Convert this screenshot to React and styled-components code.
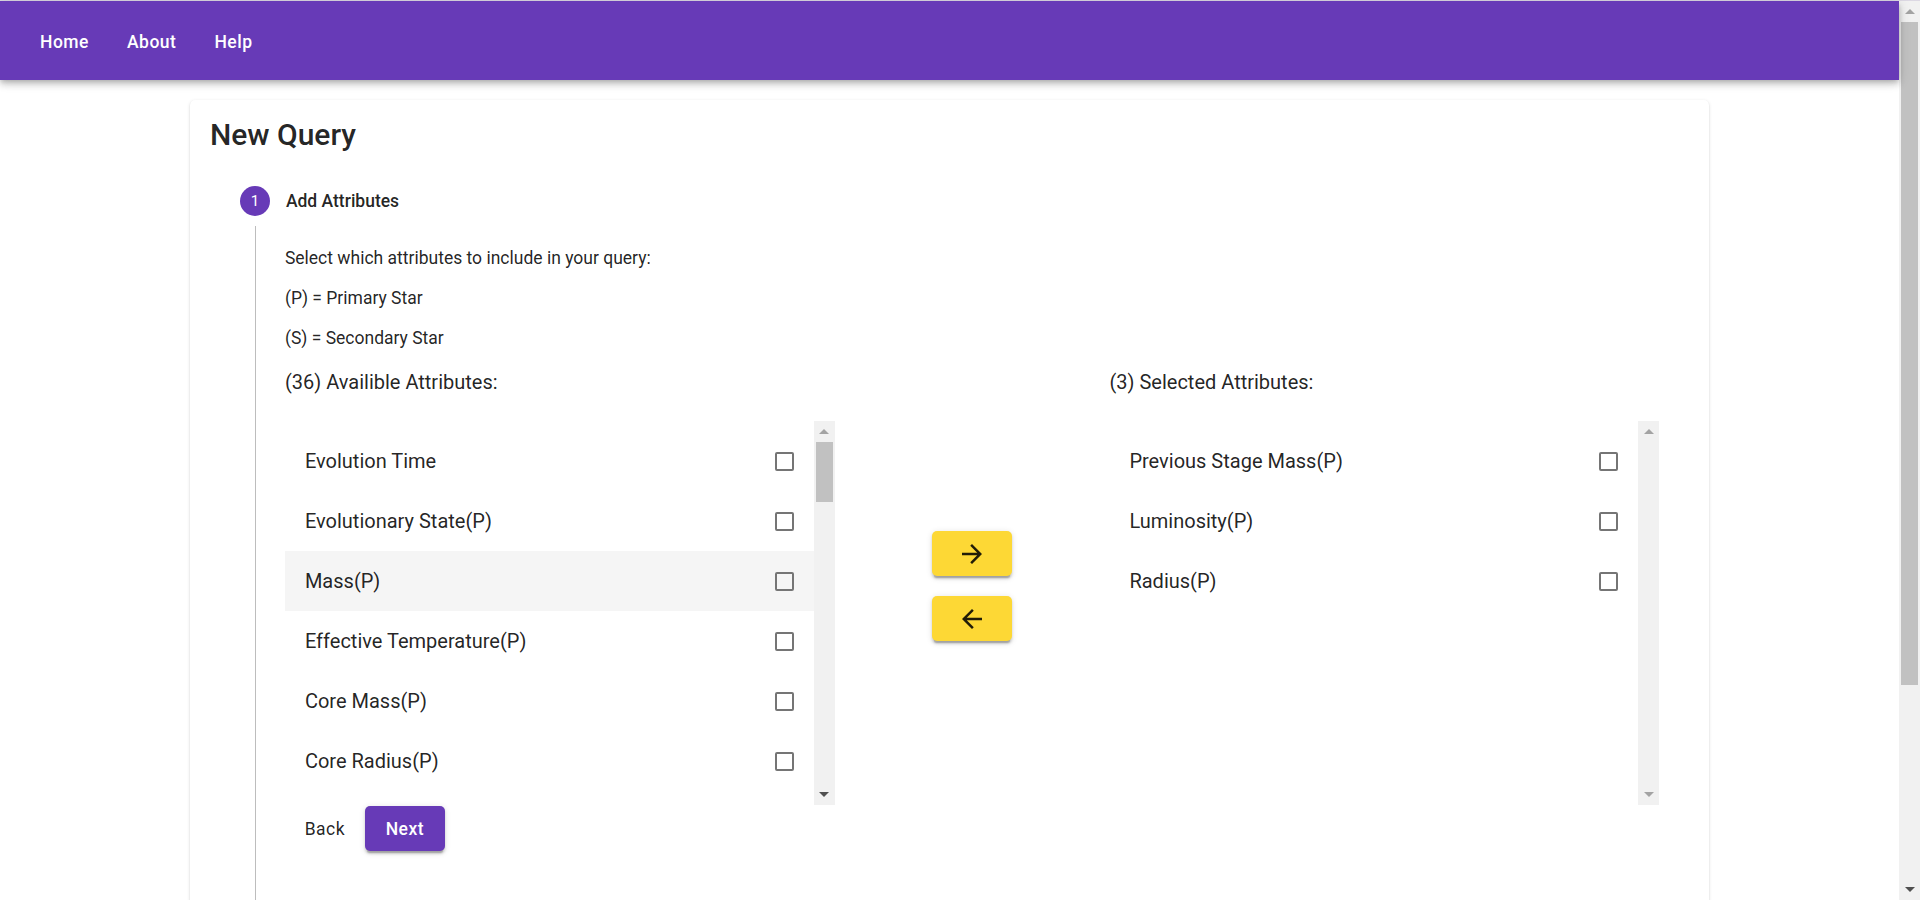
import React from 'react'
import styled, { createGlobalStyle } from 'styled-components'

const PURPLE = '#673ab7'
const TEXT = 'rgba(0, 0, 0, 0.87)'
const LIGHT_ARROW = '#a3a3a3'
const DARK_ARROW = '#505050'

const ROW_HEIGHT = 60
const LIST_HEIGHT = 384
const LIST_PADDING = 10
const BAR = 21
const PAGE_HEIGHT = 1163
const VIEWPORT = 900

const GlobalStyle = createGlobalStyle`
  * { box-sizing: border-box; }
  html, body {
    margin: 0;
    padding: 0;
    background: #fff;
  }
  body {
    font-family: Roboto, "Liberation Sans", Arial, sans-serif;
    color: ${TEXT};
  }
`

const Page = styled.div`
  display: flex;
  align-items: flex-start;
  border-top: 1px solid #dcd8e3;
`

const PageBody = styled.div`
  flex: 1;
  min-width: 0;
`

const ScrollBar = styled.div`
  width: ${BAR}px;
  flex-shrink: 0;
  background: #f1f1f1;
  display: flex;
  flex-direction: column;
`

const PageScrollBar = styled(ScrollBar)`
  position: sticky;
  top: 0;
  height: calc(100vh - 1px);
`

const ScrollArrow = styled.div`
  height: ${BAR}px;
  flex-shrink: 0;
  display: grid;
  place-items: center;
`

const Track = styled.div`
  flex: 1;
`

const Thumb = styled.div`
  margin: 0 2px;
  background: #c1c1c1;
`

const Triangle = ({ down, color }) => (
  <svg width="10" height="5" viewBox="0 0 10 5" fill={color}>
    <polygon points={down ? '0,0 10,0 5,5' : '0,5 5,0 10,5'} />
  </svg>
)

const FakeScroll = ({ thumb, canDown, as }) => {
  const Bar = as || ScrollBar
  return (
    <Bar>
      <ScrollArrow>
        <Triangle color={LIGHT_ARROW} />
      </ScrollArrow>
      <Track>{thumb ? <Thumb style={{ height: thumb }} /> : null}</Track>
      <ScrollArrow>
        <Triangle down color={canDown ? DARK_ARROW : LIGHT_ARROW} />
      </ScrollArrow>
    </Bar>
  )
}

const AppBar = styled.header`
  position: relative;
  z-index: 2;
  height: 79px;
  padding: 3px 30px 0;
  background: ${PURPLE};
  display: flex;
  align-items: center;
  gap: 18px;
  box-shadow: 0 2.5px 5px -1.25px rgba(0, 0, 0, 0.2),
    0 5px 6.25px 0 rgba(0, 0, 0, 0.14), 0 1.25px 12.5px 0 rgba(0, 0, 0, 0.12);
`

const NavButton = styled.button`
  background: none;
  border: none;
  color: #fff;
  font-family: inherit;
  font-size: 17.5px;
  font-weight: 500;
  letter-spacing: 0.02857em;
  line-height: 1.75;
  padding: 7.5px 10px;
  cursor: pointer;
`

const Card = styled.main`
  width: 80%;
  margin: 20px auto 82px;
  background: #fff;
  border-radius: 5px;
  padding: 15px 20px 20px;
  box-shadow: 0 2.5px 1.25px -1.25px rgba(0, 0, 0, 0.2),
    0 1.25px 1.25px 0 rgba(0, 0, 0, 0.14), 0 1.25px 3.75px 0 rgba(0, 0, 0, 0.12);
`

const Title = styled.h1`
  margin: 0;
  font-size: 30px;
  line-height: 40px;
  font-weight: 500;
  color: ${TEXT};
`

const Stepper = styled.div`
  padding: 30px;
`

const StepHeader = styled.div`
  display: flex;
  align-items: center;
  gap: 16px;
  padding: ${p => (p.$first ? '1px 0 10px' : '10px 0')};
`

const StepIcon = styled.span`
  width: 30px;
  height: 30px;
  border-radius: 50%;
  background: ${p => (p.$active ? PURPLE : 'rgba(0, 0, 0, 0.38)')};
  color: #fff;
  font-size: 15px;
  display: grid;
  place-items: center;
  flex-shrink: 0;
`

const StepLabel = styled.span`
  font-size: 17.5px;
  font-weight: ${p => (p.$active ? 500 : 400)};
  color: ${p => (p.$active ? TEXT : 'rgba(0, 0, 0, 0.54)')};
`

const StepContent = styled.div`
  margin-left: 15px;
  border-left: 1px solid #bdbdbd;
  padding: 0 0 20px 29px;
`

const Connector = styled.div`
  margin-left: 15px;
  border-left: 1px solid #bdbdbd;
  height: 30px;
`

const Intro = styled.div`
  display: flex;
  flex-direction: column;
  gap: 15px;
  padding-top: 20px;

  p {
    margin: 0;
    font-size: 17.5px;
    line-height: 25px;
  }
`

const AttrGrid = styled.div`
  display: grid;
  grid-template-columns: 40% 20% 40%;
  margin-top: 16px;
`

const Column = styled.section`
  display: flex;
  flex-direction: column;
`

const ColumnLabel = styled.div`
  font-size: 20px;
  line-height: 30px;
  margin-bottom: 24px;
`

const ListFrame = styled.div`
  display: flex;
  height: ${LIST_HEIGHT}px;
`

const ListBox = styled.div`
  flex: 1;
  min-width: 0;
  overflow: hidden;
  padding: ${LIST_PADDING}px 0;
`

const Row = styled.div`
  height: ${ROW_HEIGHT}px;
  display: flex;
  align-items: center;
  justify-content: space-between;
  padding: 0 20px;
  font-size: 20px;
  white-space: nowrap;
  background: ${p => (p.$hover ? '#f5f5f5' : 'transparent')};
`

const Box = styled.span`
  width: 19px;
  height: 19px;
  border: 2px solid #757575;
  border-radius: 2px;
  flex-shrink: 0;
`

const Transfer = styled.div`
  display: flex;
  flex-direction: column;
  align-items: center;
  justify-content: center;
  gap: 20px;
`

const YellowButton = styled.button`
  width: 80px;
  height: 45px;
  border: none;
  border-radius: 5px;
  background: #fdd835;
  display: grid;
  place-items: center;
  cursor: pointer;
  box-shadow: 0 3.75px 1.25px -2.5px rgba(0, 0, 0, 0.2),
    0 2.5px 2.5px 0 rgba(0, 0, 0, 0.14), 0 1.25px 6.25px 0 rgba(0, 0, 0, 0.12);
`

const Actions = styled.div`
  display: flex;
  align-items: center;
  margin-top: 1px;
`

const TextButton = styled.button`
  min-width: 80px;
  height: 45px;
  padding: 0 10px;
  border: none;
  border-radius: 5px;
  background: ${p => (p.$primary ? PURPLE : 'transparent')};
  color: ${p => (p.$primary ? '#fff' : TEXT)};
  font-family: inherit;
  font-size: 17.5px;
  font-weight: ${p => (p.$primary ? 500 : 400)};
  letter-spacing: 0.02857em;
  cursor: pointer;
  box-shadow: ${p =>
    p.$primary
      ? '0 3.75px 1.25px -2.5px rgba(0,0,0,0.2), 0 2.5px 2.5px 0 rgba(0,0,0,0.14), 0 1.25px 6.25px 0 rgba(0,0,0,0.12)'
      : 'none'};
`

const Arrow = ({ back }) => (
  <svg width="30" height="30" viewBox="0 0 24 24" fill={TEXT}>
    {back ? (
      <path d="M20 11H7.83l5.59-5.59L12 4l-8 8 8 8 1.41-1.41L7.83 13H20v-2z" />
    ) : (
      <path d="M12 4l-1.41 1.41L16.17 11H4v2h12.17l-5.58 5.59L12 20l8-8z" />
    )}
  </svg>
)

const available = [
  'Evolution Time',
  'Evolutionary State(P)',
  'Mass(P)',
  'Effective Temperature(P)',
  'Core Mass(P)',
  'Core Radius(P)',
  'Envelope Mass(P)',
  'Envelope Radius(P)',
  'Angular Momentum(P)',
  'Spin(P)',
  'Main Sequence Lifetime(P)',
  'Age(P)',
  'Evolutionary State(S)',
  'Mass(S)',
  'Previous Stage Mass(S)',
  'Luminosity(S)',
  'Radius(S)',
  'Effective Temperature(S)',
  'Core Mass(S)',
  'Core Radius(S)',
  'Envelope Mass(S)',
  'Envelope Radius(S)',
  'Angular Momentum(S)',
  'Spin(S)',
  'Main Sequence Lifetime(S)',
  'Age(S)',
  'Semi-Major Axis',
  'Eccentricity',
  'Orbital Period',
  'Separation',
  'Roche Lobe Radius(P)',
  'Roche Lobe Radius(S)',
  'Mass Transfer Rate',
  'Binary Type',
  'Total Mass',
  'Mass Ratio',
]

const selected = ['Previous Stage Mass(P)', 'Luminosity(P)', 'Radius(P)']

const AttributeList = ({ items, hover }) => {
  const contentHeight = items.length * ROW_HEIGHT + LIST_PADDING * 2
  const track = LIST_HEIGHT - BAR * 2
  const overflows = contentHeight > LIST_HEIGHT
  const thumb = overflows ? (track * LIST_HEIGHT) / contentHeight : 0
  return (
    <ListFrame>
      <ListBox>
        {items.map(name => (
          <Row key={name} $hover={name === hover}>
            {name}
            <Box />
          </Row>
        ))}
      </ListBox>
      <FakeScroll thumb={thumb} canDown={overflows} />
    </ListFrame>
  )
}

const pageThumb = ((VIEWPORT - 1 - BAR * 2) * VIEWPORT) / PAGE_HEIGHT

export default function App() {
  return (
    <>
      <GlobalStyle />
      <Page>
        <PageBody>
          <AppBar>
            <NavButton>Home</NavButton>
            <NavButton>About</NavButton>
            <NavButton>Help</NavButton>
          </AppBar>
          <Card>
            <Title>New Query</Title>
            <Stepper>
              <StepHeader $first>
                <StepIcon $active>1</StepIcon>
                <StepLabel $active>Add Attributes</StepLabel>
              </StepHeader>
              <StepContent>
                <Intro>
                  <p>Select which attributes to include in your query:</p>
                  <p>(P) = Primary Star</p>
                  <p>(S) = Secondary Star</p>
                </Intro>
                <AttrGrid>
                  <Column>
                    <ColumnLabel>({available.length}) Availible Attributes:</ColumnLabel>
                    <AttributeList items={available} hover="Mass(P)" />
                  </Column>
                  <Transfer>
                    <YellowButton aria-label="add">
                      <Arrow />
                    </YellowButton>
                    <YellowButton aria-label="remove">
                      <Arrow back />
                    </YellowButton>
                  </Transfer>
                  <Column>
                    <ColumnLabel>({selected.length}) Selected Attributes:</ColumnLabel>
                    <AttributeList items={selected} />
                  </Column>
                </AttrGrid>
                <Actions>
                  <TextButton>Back</TextButton>
                  <TextButton $primary>Next</TextButton>
                </Actions>
              </StepContent>
              <Connector />
              <StepHeader>
                <StepIcon>2</StepIcon>
                <StepLabel>Add Filters</StepLabel>
              </StepHeader>
              <Connector />
              <StepHeader>
                <StepIcon>3</StepIcon>
                <StepLabel>Review Query</StepLabel>
              </StepHeader>
            </Stepper>
          </Card>
        </PageBody>
        <FakeScroll as={PageScrollBar} thumb={pageThumb} canDown />
      </Page>
    </>
  )
}
